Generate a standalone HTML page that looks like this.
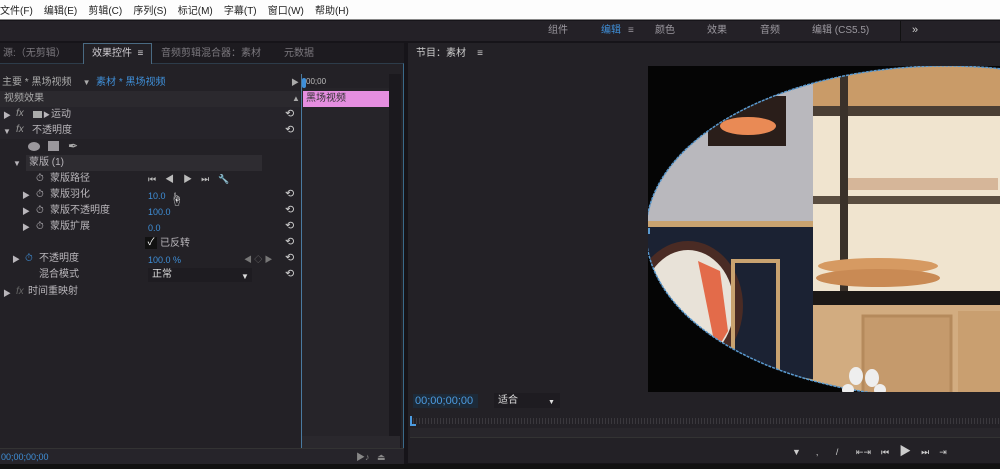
<!DOCTYPE html>
<html><head><meta charset="utf-8"><style>
*{margin:0;padding:0;box-sizing:border-box}
body{width:1000px;height:469px;overflow:hidden;background:#161419;font-family:"Liberation Sans","Noto Sans CJK SC",sans-serif;font-size:10px;color:#b9b6bb;position:relative}
.a{position:absolute;white-space:nowrap;line-height:12px}
.blue{color:#3f8fd8}
</style></head><body>
<!-- menu -->
<div class="a" style="left:0;top:0;width:1000px;height:20px;background:#fdfdfd;border-bottom:1px solid #888"></div>
<div class="a" style="left:0;top:6px;font-size:10px;color:#222;word-spacing:0">文件(F)&nbsp;&nbsp;&nbsp;&nbsp;编辑(E)&nbsp;&nbsp;&nbsp;&nbsp;剪辑(C)&nbsp;&nbsp;&nbsp;&nbsp;序列(S)&nbsp;&nbsp;&nbsp;&nbsp;标记(M)&nbsp;&nbsp;&nbsp;&nbsp;字幕(T)&nbsp;&nbsp;&nbsp;&nbsp;窗口(W)&nbsp;&nbsp;&nbsp;&nbsp;帮助(H)</div>
<!-- workspace bar -->
<div class="a" style="left:0;top:21px;width:1000px;height:20px;background:#242127"></div>
<div class="a" style="left:548px;top:25px;color:#9c99a0">组件</div>
<div class="a" style="left:601px;top:25px;color:#3f8fd8">编辑</div>
<div class="a" style="left:628px;top:25px;color:#9c99a0">≡</div>
<div class="a" style="left:655px;top:25px;color:#9c99a0">颜色</div>
<div class="a" style="left:707px;top:25px;color:#9c99a0">效果</div>
<div class="a" style="left:760px;top:25px;color:#9c99a0">音频</div>
<div class="a" style="left:812px;top:25px;color:#9c99a0">编辑 (CS5.5)</div>
<div class="a" style="left:900px;top:21px;width:1px;height:20px;background:#111"></div>
<div class="a" style="left:912px;top:24px;color:#ccc;font-size:11px">»</div>
<!-- left panel -->
<div class="a" style="left:0;top:43px;width:404px;height:21px;background:#1d1b20"></div>
<div class="a" style="left:0;top:63px;width:404px;height:401px;background:#232126;border:1px solid #3a6a8a;border-left:none;border-top:1px solid #2d3c4a"></div>
<div class="a" style="left:83px;top:43px;width:69px;height:21px;background:#232126;border:1px solid #4a6a82;border-bottom:none"></div>
<div class="a" style="left:3px;top:48px;color:#7b787e">源:（无剪辑）</div>
<div class="a" style="left:92px;top:48px;color:#d0cdd2">效果控件&nbsp;&nbsp;≡</div>
<div class="a" style="left:161px;top:48px;color:#7b787e">音频剪辑混合器：素材</div>
<div class="a" style="left:284px;top:48px;color:#7b787e">元数据</div>
<div class="a" style="left:2px;top:77px;color:#aaa">主要 * 黑场视频&nbsp;&nbsp;&nbsp;&nbsp;<span style="font-size:8px">▼</span>&nbsp;&nbsp;<span class="blue">素材 * 黑场视频</span></div>
<div class="a" style="left:291px;top:77px;font-size:8px;color:#aaa">▶</div>
<div class="a" style="left:0;top:91px;width:300px;height:16px;background:#2b292e"></div>
<div class="a" style="left:4px;top:93px;color:#aaa">视频效果</div>
<div class="a" style="left:292px;top:93px;font-size:8px;color:#aaa">▲</div>
<!-- rows -->
<div class="a" style="left:0;top:107px;width:300px;height:16px;background:#26242a"></div>
<div class="a" style="left:3px;top:110px;font-size:8px">▶</div><div class="a" style="left:16px;top:108px;font-style:italic;color:#999">fx</div>
<div class="a" style="left:33px;top:111px;width:9px;height:7px;background:#aaa"></div><div class="a" style="left:43px;top:110px;font-size:7px">▶</div>
<div class="a" style="left:51px;top:109px">运动</div>
<div class="a" style="left:0;top:123px;width:300px;height:16px;background:#26242a"></div>
<div class="a" style="left:3px;top:126px;font-size:8px">▼</div><div class="a" style="left:16px;top:124px;font-style:italic;color:#999">fx</div>
<div class="a" style="left:32px;top:125px">不透明度</div>
<div class="a" style="left:28px;top:142px;width:12px;height:9px;border-radius:50%;background:#9a979c"></div>
<div class="a" style="left:48px;top:141px;width:11px;height:10px;background:#9a979c"></div>
<div class="a" style="left:68px;top:140px;font-size:12px;color:#aaa">✒</div>
<div class="a" style="left:26px;top:155px;width:236px;height:16px;background:#2e2c31"></div>
<div class="a" style="left:13px;top:158px;font-size:8px">▼</div>
<div class="a" style="left:29px;top:157px">蒙版 (1)</div>
<div class="a" style="left:36px;top:173px">⏱</div><div class="a" style="left:50px;top:173px">蒙版路径</div>
<div class="a" style="left:148px;top:173px;color:#bbb;letter-spacing:9px;font-size:9px">⏮◀▶⏭🔧</div>
<div class="a" style="left:22px;top:190px;font-size:8px">▶</div><div class="a" style="left:36px;top:189px">⏱</div><div class="a" style="left:50px;top:189px">蒙版羽化</div>
<div class="a blue" style="left:148px;top:190px;font-size:9px">10.0</div>
<div class="a" style="left:170px;top:194px;color:#eee;font-size:13px">☝</div>
<div class="a" style="left:22px;top:206px;font-size:8px">▶</div><div class="a" style="left:36px;top:205px">⏱</div><div class="a" style="left:50px;top:205px">蒙版不透明度</div>
<div class="a blue" style="left:148px;top:206px;font-size:9px">100.0</div>
<div class="a" style="left:22px;top:222px;font-size:8px">▶</div><div class="a" style="left:36px;top:221px">⏱</div><div class="a" style="left:50px;top:221px">蒙版扩展</div>
<div class="a blue" style="left:148px;top:222px;font-size:9px">0.0</div>
<div class="a" style="left:145px;top:237px;width:12px;height:12px;background:#111;color:#fff;font-size:10px;line-height:12px;text-align:center">✓</div>
<div class="a" style="left:160px;top:238px">已反转</div>
<div class="a" style="left:12px;top:254px;font-size:8px">▶</div><div class="a blue" style="left:25px;top:253px">⏱</div><div class="a" style="left:39px;top:253px">不透明度</div>
<div class="a blue" style="left:148px;top:254px;font-size:9px">100.0 %</div>
<div class="a" style="left:244px;top:254px;font-size:8px;color:#777">◀ ◇ ▶</div>
<div class="a" style="left:39px;top:269px">混合模式</div>
<div class="a" style="left:148px;top:268px;width:104px;height:14px;background:#1e1c21"></div>
<div class="a" style="left:152px;top:269px;color:#ddd">正常</div>
<div class="a" style="left:241px;top:271px;font-size:8px;color:#ddd">▼</div>
<div class="a" style="left:3px;top:288px;font-size:8px">▶</div><div class="a" style="left:16px;top:286px;font-style:italic;color:#666">fx</div>
<div class="a" style="left:28px;top:286px">时间重映射</div>
<!-- reset icons -->
<div class="a" style="left:285px;top:106px;color:#ccc;font-size:11px;line-height:16px">⟲<br>⟲</div>
<div class="a" style="left:285px;top:186px;color:#ccc;font-size:11px;line-height:16px">⟲<br>⟲<br>⟲<br>⟲<br>⟲<br>⟲</div>
<!-- mini timeline -->
<div class="a" style="left:301px;top:74px;width:1px;height:374px;background:#4a7aa0"></div>
<div class="a" style="left:302px;top:88px;width:87px;height:348px;background:#262429"></div>
<div class="a" style="left:389px;top:74px;width:12px;height:374px;background:#1b191e"></div>
<div class="a" style="left:306px;top:76px;font-size:8px;color:#bbb">00;00</div>
<div class="a" style="left:302px;top:78px;width:4px;height:10px;background:#3f8fd8;border-radius:2px"></div>
<div class="a" style="left:303px;top:91px;width:86px;height:16px;background:#e58ee0"></div>
<div class="a" style="left:306px;top:93px;color:#333">黑场视频</div>
<div class="a" style="left:302px;top:436px;width:98px;height:12px;background:#2a282d"></div>
<div class="a" style="left:0;top:448px;width:404px;height:16px;background:#26242a;border-top:1px solid #333"></div>
<div class="a blue" style="left:1px;top:451px;font-size:9px">00;00;00;00</div>
<div class="a" style="left:356px;top:451px;color:#888;font-size:9px">▶♪&nbsp;&nbsp;&nbsp;⏏</div>
<!-- right panel -->
<div class="a" style="left:408px;top:43px;width:592px;height:420px;background:#232126"></div>
<div class="a" style="left:416px;top:48px;color:#ccc">节目：素材&nbsp;&nbsp;&nbsp;&nbsp;≡</div>
<svg class="a" style="left:648px;top:66px" width="352" height="326" viewBox="0 0 352 326">
<defs><clipPath id="c"><ellipse cx="298" cy="166" rx="300" ry="166"/></clipPath></defs>
<rect width="352" height="326" fill="#050505"/>
<g clip-path="url(#c)">
<rect x="0" y="0" width="170" height="160" fill="#b9b8bd"/>
<rect x="60" y="30" width="78" height="50" fill="#2a1e1a"/>
<ellipse cx="100" cy="60" rx="28" ry="9" fill="#e98a55"/>
<rect x="0" y="155" width="170" height="6" fill="#c9a370"/>
<rect x="0" y="161" width="170" height="170" fill="#1b2233"/>
<ellipse cx="40" cy="240" rx="55" ry="65" fill="#4a2b24"/>
<ellipse cx="40" cy="240" rx="46" ry="56" fill="#e8e2d8"/>
<path d="M50 195 L72 205 L80 265 L68 285 Z" fill="#e36b4a"/>
<rect x="85" y="195" width="45" height="110" fill="none" stroke="#c9a370" stroke-width="4"/>
<rect x="165" y="0" width="190" height="230" fill="#f0e4cf"/>
<rect x="165" y="0" width="190" height="40" fill="#c99b68"/>
<rect x="165" y="40" width="190" height="10" fill="#4a3e34"/>
<rect x="165" y="130" width="190" height="8" fill="#5a4d40"/>
<rect x="200" y="112" width="150" height="12" fill="#d6b699"/>
<rect x="192" y="0" width="8" height="240" fill="#3a312a"/>
<ellipse cx="230" cy="200" rx="60" ry="8" fill="#d69a62"/>
<ellipse cx="230" cy="212" rx="62" ry="9" fill="#c98a54"/>
<rect x="165" y="225" width="190" height="14" fill="#1c1816"/>
<rect x="165" y="239" width="190" height="100" fill="#d2ac80"/>
<rect x="215" y="250" width="88" height="80" fill="#c59a6c" stroke="#b58a5c" stroke-width="3"/>
<rect x="310" y="245" width="50" height="90" fill="#c99f70"/>
<ellipse cx="130" cy="322" rx="50" ry="12" fill="#d9b880"/>
</g>
<ellipse cx="298" cy="166" rx="300" ry="166" fill="none" stroke="#5a9ad0" stroke-width="1.5" stroke-dasharray="3 1"/>
<rect x="-3" y="162" width="5" height="6" fill="#5a9ad0"/>
<g fill="#eee"><ellipse cx="208" cy="310" rx="7" ry="9"/><ellipse cx="224" cy="312" rx="7" ry="9"/><ellipse cx="200" cy="324" rx="6" ry="6"/><ellipse cx="232" cy="324" rx="6" ry="6"/></g>
</svg>
<div class="a" style="left:413px;top:394px;width:65px;height:14px;background:#1d2a38"></div>
<div class="a blue" style="left:415px;top:395px;font-size:11px;color:#4c9be0">00;00;00;00</div>
<div class="a" style="left:494px;top:393px;width:66px;height:15px;background:#1e1c21"></div>
<div class="a" style="left:498px;top:395px;color:#ddd">适合</div>
<div class="a" style="left:548px;top:397px;font-size:7px;color:#ddd">▼</div>
<div class="a" style="left:410px;top:418px;width:590px;height:6px;background:repeating-linear-gradient(90deg,#3a383d 0 1px,transparent 1px 3px)"></div>
<div class="a" style="left:410px;top:428px;width:590px;height:10px;background:#28262b;border-bottom:1px solid #333"></div>
<div class="a" style="left:410px;top:416px;width:6px;height:10px;border-left:2px solid #4c9be0;border-bottom:2px solid #4c9be0"></div>
<div class="a" style="left:792px;top:445px;color:#ccc;font-size:9px;letter-spacing:0">▼&nbsp;&nbsp;&nbsp;&nbsp;&nbsp;&nbsp;,&nbsp;&nbsp;&nbsp;&nbsp;&nbsp;&nbsp;&nbsp;/&nbsp;&nbsp;&nbsp;&nbsp;&nbsp;&nbsp;&nbsp;⇤⇥&nbsp;&nbsp;&nbsp;&nbsp;⏮&nbsp;&nbsp;&nbsp;&nbsp;<span style="font-size:12px">▶</span>&nbsp;&nbsp;&nbsp;&nbsp;⏭&nbsp;&nbsp;&nbsp;&nbsp;⇥</div>
<div class="a" style="left:0;top:464px;width:1000px;height:5px;background:#111"></div>
</body></html>
